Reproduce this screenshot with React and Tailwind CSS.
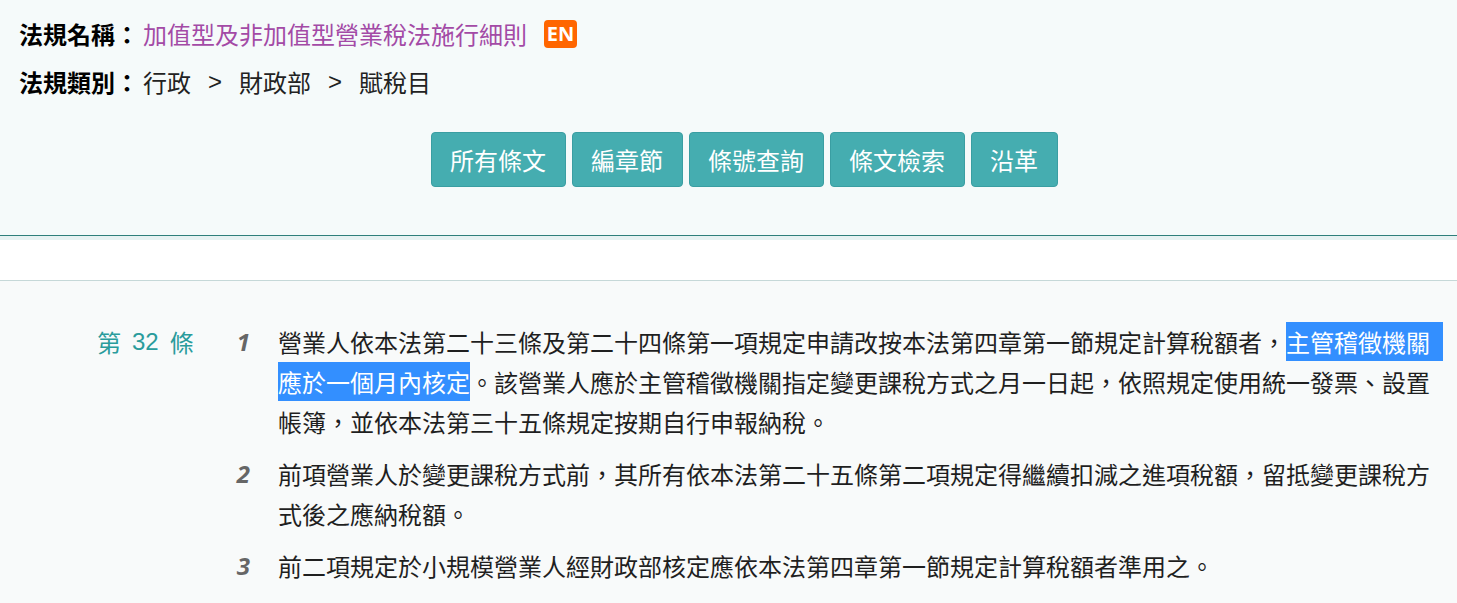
import React from "react";

const CJK = { fontFamily: '"Noto Sans CJK TC", "Noto Sans", sans-serif' };

const tabs = ["所有條文", "編章節", "條號查詢", "條文檢索", "沿革"];

const Para = ({ no, children }) => (
  <div className="flex">
    <div className="w-[28px] text-right text-[24px] leading-[40px] font-bold italic text-[#666] font-['Open_Sans',sans-serif]">
      {no}
    </div>
    <div className="ml-[28px] w-[1168px] text-[24px] leading-[40px] text-[#1f1f1f]">{children}</div>
  </div>
);

const App = () => {
  return (
    <div style={CJK} className="w-[1457px] h-[603px] overflow-hidden bg-[#f8fafa]">
      {/* header */}
      <div className="bg-[#f5fafa] px-[19px] pt-[10px] pb-[48px]">
        <div className="flex h-[48px] items-center text-[24px]">
          <span className="font-bold text-black">法規名稱：</span>
          <span className="ml-1 text-[#a34aa6]">加值型及非加值型營業稅法施行細則</span>
          <span className="ml-[17px] flex h-[28px] w-[33px] items-center justify-center rounded-[4px] bg-[#ff6600] text-[20px] font-bold text-white font-['Open_Sans',sans-serif]">
            EN
          </span>
        </div>
        <div className="flex h-[48px] items-center text-[24px] text-[#222]">
          <span className="font-bold text-black">法規類別：</span>
          <span className="ml-1">行政</span>
          <span className="mx-[17px] font-['Liberation_Sans',sans-serif]">&gt;</span>
          <span>財政部</span>
          <span className="mx-[17px] font-['Liberation_Sans',sans-serif]">&gt;</span>
          <span>賦稅目</span>
        </div>
        <div className="mt-[26px] flex justify-center gap-[6px] pl-[31px]">
          {tabs.map((t) => (
            <button
              key={t}
              className="h-[55px] rounded-[4px] border border-[#3a9ea2] bg-[#45adb0] px-[18.5px] text-[24px] leading-none text-white"
            >
              {t}
            </button>
          ))}
        </div>
      </div>
      <div className="h-px bg-[#2f7f7b]" />
      <div className="h-[4px] bg-[#e7f2f2]" />
      <div className="h-[41px] bg-white border-b border-[#c6d8d8]" />

      {/* article */}
      <div className="flex pl-[97px] pt-[41px]">
        <div className="w-[125px] text-[24px] leading-[40px] text-[#2a9c9c] flex">
          <span>第</span>
          <span className="mx-[11px] font-['Liberation_Sans',sans-serif]">32</span>
          <span>條</span>
        </div>
        <div className="flex flex-col gap-[12px]">
          <Para no="1">
            營業人依本法第二十三條及第二十四條第一項規定申請改按本法第四章第一節規定計算稅額者，
            <span className="bg-[#338fff] py-[2px] pr-[13px] text-white">主管稽徵機關</span>
            <span className="bg-[#338fff] py-[2px] text-white">應於一個月內核定</span>
            。該營業人應於主管稽徵機關指定變更課稅方式之月一日起，依照規定使用統一發票、設置帳簿，並依本法第三十五條規定按期自行申報納稅。
          </Para>
          <Para no="2">
            前項營業人於變更課稅方式前，其所有依本法第二十五條第二項規定得繼續扣減之進項稅額，留抵變更課稅方式後之應納稅額。
          </Para>
          <Para no="3">前二項規定於小規模營業人經財政部核定應依本法第四章第一節規定計算稅額者準用之。</Para>
        </div>
      </div>
    </div>
  );
};

export default App;
